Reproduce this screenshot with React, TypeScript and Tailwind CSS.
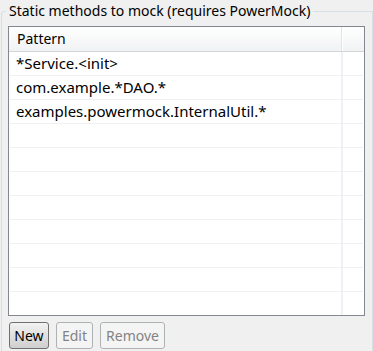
const rows = ['*Service.<init>', 'com.example.*DAO.*', 'examples.powermock.InternalUtil.*', '', '', '', '', '', '', '', ''];

export default function App() {
  return (
    <div className="w-[373px] h-[351px] overflow-hidden bg-[#f0f0f0] text-[14px] text-black font-['Noto_Sans',sans-serif]">
      <div className="relative ml-px mt-[11px] w-[372px] h-[360px] border border-[#d5dfe5] rounded-tl-[3px] pl-[6px] pr-[7px] pt-[14px]">
        <div className="absolute left-[4px] -top-[10px] px-[3px] bg-[#f0f0f0] leading-[18px]">
          Static methods to mock (requires PowerMock)
        </div>

        <div className="h-[290px] border border-[#828790] bg-white flex flex-col overflow-hidden">
          <div className="flex h-[25px] shrink-0 border-b border-[#d5d5d5] bg-gradient-to-b from-white to-[#f1f2f4]">
            <div className="flex-1 pl-[8px] leading-[24px]">Pattern</div>
            <div className="w-[2px] bg-[#e3e3e3] border-r border-white" />
            <div className="w-[21px]" />
          </div>
          <div className="relative flex-1">
            {rows.map((r, i) => (
              <div key={i} className="mx-px h-[24px] border-b border-[#f0f0f0] pl-[6px] text-[15px] leading-[23px] whitespace-nowrap">
                {r}
              </div>
            ))}
            <div className="absolute top-0 bottom-0 left-[332px] w-[2px] bg-[#eef0f6]" />
          </div>
        </div>

        <div className="flex gap-[7px] mt-[6px] ml-px">
          <button className="w-[40px] h-[27px] rounded-[3px] border border-[#707070] bg-gradient-to-b from-[#f2f2f2] to-[#cfcfcf] leading-[25px] text-black">
            New
          </button>
          <button disabled className="w-[37px] h-[27px] rounded-[3px] border border-[#adb2b5] bg-[#f4f4f4] leading-[25px] text-[#838383]">
            Edit
          </button>
          <button disabled className="w-[65px] h-[27px] rounded-[3px] border border-[#adb2b5] bg-[#f4f4f4] leading-[25px] text-[#838383]">
            Remove
          </button>
        </div>
      </div>
    </div>
  );
}
